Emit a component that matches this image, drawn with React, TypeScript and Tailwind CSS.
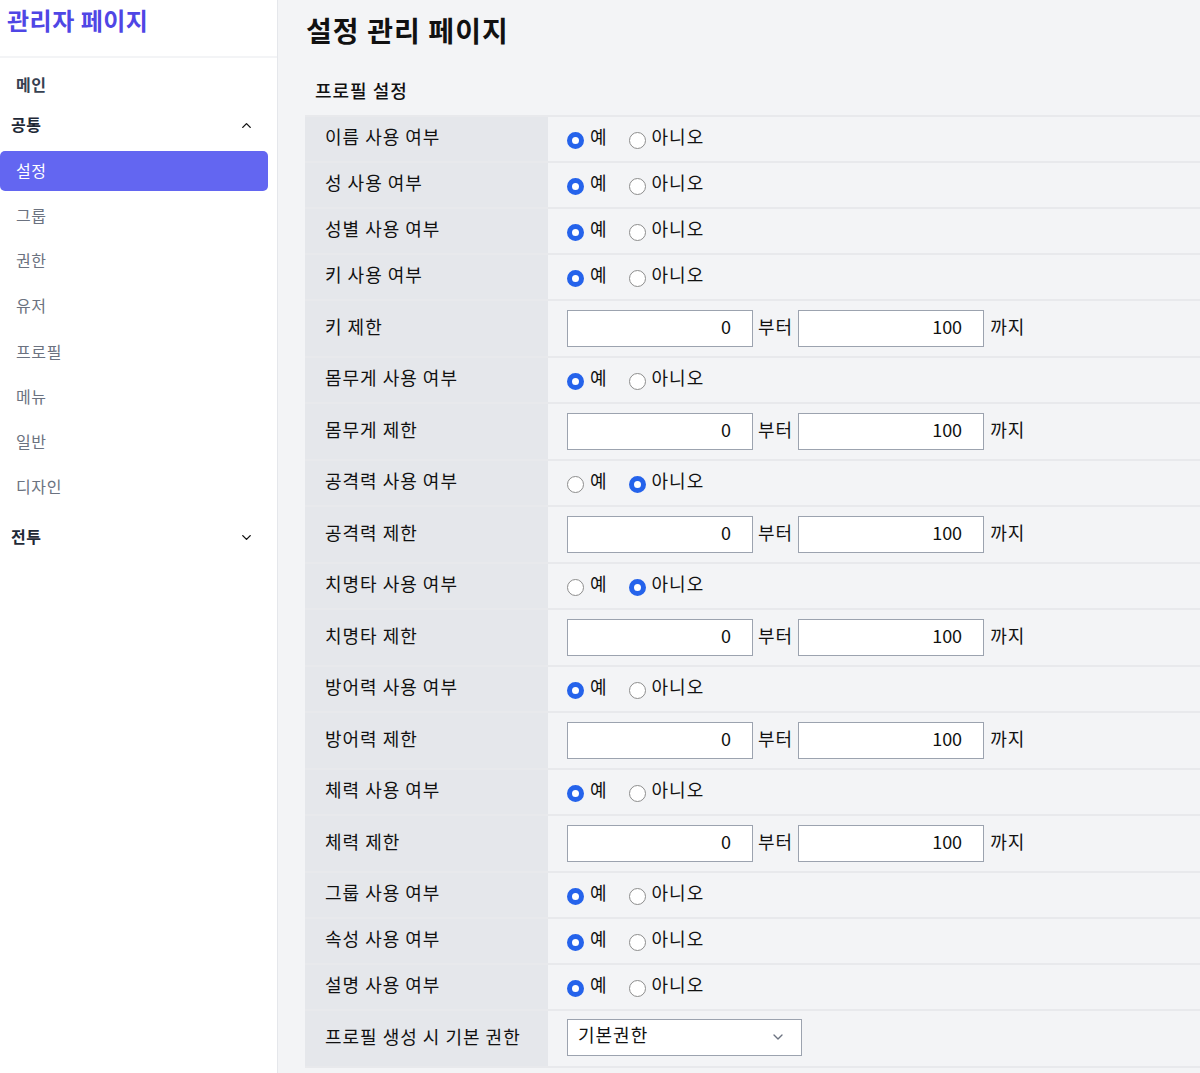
import React from "react";
import { ChevronUp, ChevronDown } from "lucide-react";

type Row =
  | { kind: "radio"; label: string; yes: boolean }
  | { kind: "range"; label: string }
  | { kind: "select"; label: string };

const rows: Row[] = [
  { kind: "radio", label: "이름 사용 여부", yes: true },
  { kind: "radio", label: "성 사용 여부", yes: true },
  { kind: "radio", label: "성별 사용 여부", yes: true },
  { kind: "radio", label: "키 사용 여부", yes: true },
  { kind: "range", label: "키 제한" },
  { kind: "radio", label: "몸무게 사용 여부", yes: true },
  { kind: "range", label: "몸무게 제한" },
  { kind: "radio", label: "공격력 사용 여부", yes: false },
  { kind: "range", label: "공격력 제한" },
  { kind: "radio", label: "치명타 사용 여부", yes: false },
  { kind: "range", label: "치명타 제한" },
  { kind: "radio", label: "방어력 사용 여부", yes: true },
  { kind: "range", label: "방어력 제한" },
  { kind: "radio", label: "체력 사용 여부", yes: true },
  { kind: "range", label: "체력 제한" },
  { kind: "radio", label: "그룹 사용 여부", yes: true },
  { kind: "radio", label: "속성 사용 여부", yes: true },
  { kind: "radio", label: "설명 사용 여부", yes: true },
  { kind: "select", label: "프로필 생성 시 기본 권한" },
];

const radioCls =
  "appearance-none m-0 w-[17px] h-[17px] rounded-full border border-[#8d8d8d] bg-white checked:border-[5px] checked:border-[#2563eb] shrink-0";

function RadioPair({ name, yes }: { name: string; yes: boolean }) {
  return (
    <div className="flex items-center text-[18px] text-[#111] tracking-[1px]">
      <label className="flex items-center">
        <input type="radio" name={name} defaultChecked={yes} className={`${radioCls} mt-[2px]`} />
        <span className="ml-[6px] pb-[5px]">예</span>
      </label>
      <label className="flex items-center ml-[21px]">
        <input type="radio" name={name} defaultChecked={!yes} className={`${radioCls} mt-[2px]`} />
        <span className="ml-[6px] pb-[5px]">아니오</span>
      </label>
    </div>
  );
}

const inputCls =
  "w-[186px] h-[37px] border border-[#9ca3af] bg-white text-right pr-[21px] pb-[5px] text-[18px] text-[#111] tracking-normal outline-none";

function Range() {
  return (
    <div className="flex items-center text-[18px] text-[#111] tracking-[1px]">
      <input type="text" defaultValue="0" className={inputCls} />
      <span className="ml-[5px] mr-[5px] pb-[5px]">부터</span>
      <input type="text" defaultValue="100" className={inputCls} />
      <span className="ml-[6px] pb-[5px]">까지</span>
    </div>
  );
}

function SelectBox() {
  return (
    <div className="relative -mt-[3px] w-[235px] h-[37px] border border-[#9ca3af] bg-white flex items-center text-[18px] text-[#111] tracking-[1px]">
      <span className="pl-[10px] pb-[5px]">기본권한</span>
      <ChevronDown className="absolute right-[15px] top-[9px] text-[#6b7280]" size={16} strokeWidth={2} />
    </div>
  );
}

const subItems = ["그룹", "권한", "유저", "프로필", "메뉴", "일반", "디자인"];

export default function App() {
  return (
    <div
      className="flex w-full min-h-[1073px] bg-[#f3f4f6]"
      style={{ fontFamily: '"Noto Sans CJK KR", "Noto Sans", sans-serif' }}
    >
      <aside className="w-[278px] shrink-0 bg-white border-r border-[#e5e7eb]">
        <div className="h-[58px] border-b-2 border-[#f3f4f6] pl-[7px] pt-[2px]">
          <div className="text-[24px] font-bold text-[#4f46e5] leading-[36px] tracking-[0.5px]">관리자 페이지</div>
        </div>
        <nav className="pr-[9px] pt-[7px]">
          <div className="h-[40px] flex items-center pl-[16px] pb-[2px] text-[16px] font-semibold text-[#374151] tracking-[0.6px]">메인</div>
          <div className="h-[40px] flex items-center justify-between pl-[11px] pr-[14px] text-[16px] font-bold text-[#1f2937] tracking-[0.6px]">
            <span className="pb-[2px]">공통</span>
            <ChevronUp size={15} strokeWidth={2.2} className="text-[#111]" />
          </div>
          <div className="mt-[6px] h-[40px] flex items-center pl-[16px] pb-[2px] bg-[#6366f1] rounded-[5px] text-white text-[16px] tracking-[0.6px]">
            설정
          </div>
          <div className="pt-[2px]">
            {subItems.map((s) => (
              <div key={s} className="h-[45.3px] flex items-center pl-[16px] pb-[2px] text-[16px] text-[#6b7280] tracking-[0.6px]">
                {s}
              </div>
            ))}
          </div>
          <div className="h-[40px] mt-[7px] flex items-center justify-between pl-[11px] pr-[14px] text-[16px] font-bold text-[#1f2937] tracking-[0.6px]">
            <span className="pb-[2px]">전투</span>
            <ChevronDown size={15} strokeWidth={2.2} className="text-[#111]" />
          </div>
        </nav>
      </aside>
      <main className="flex-1 pl-[27px] pt-[10px]">
        <h1 className="text-[28px] font-bold text-[#111] leading-[40px] pl-[1px] tracking-[1.1px]">설정 관리 페이지</h1>
        <h2 className="mt-[27px] pl-[10px] text-[18px] font-medium text-[#111] leading-[26px] tracking-[1px]">프로필 설정</h2>
        <div className="mt-[12px] border-t-2 border-[#e8e9ec]">
          {rows.map((r, i) => (
            <div
              key={i}
              className={`flex border-b-2 border-[#e8e9ec] ${r.kind === "radio" ? "h-[46px]" : "h-[57px]"}`}
            >
              <div className="w-[243px] shrink-0 bg-[#e5e7eb] flex items-center pl-[20px] pb-[5px] text-[18px] text-[#111] tracking-[1px]">
                {r.label}
              </div>
              <div className="flex-1 flex items-center pl-[19px]">
                {r.kind === "radio" && <RadioPair name={`r${i}`} yes={r.yes} />}
                {r.kind === "range" && <Range />}
                {r.kind === "select" && <SelectBox />}
              </div>
            </div>
          ))}
        </div>
      </main>
    </div>
  );
}
